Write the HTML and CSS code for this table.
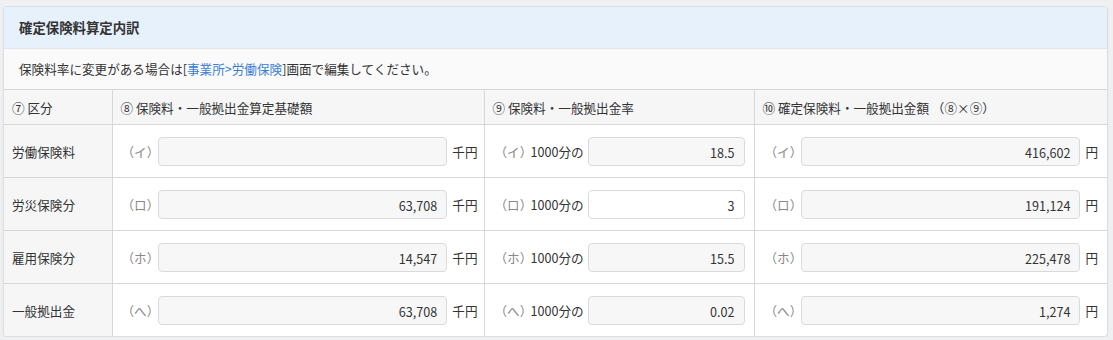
FILE: index.html
```html
<!DOCTYPE html>
<html lang="ja">
<head>
<meta charset="utf-8">
<link rel="stylesheet" href="styles.css">
</head>
<body>
<div class="card">
  <div class="card-title">確定保険料算定内訳</div>
  <div class="notice">保険料率に変更がある場合は[<a class="link" href="#">事業所&gt;労働保険</a>]画面で編集してください。</div>
  <table class="grid">
    <colgroup>
      <col class="c1"><col class="c2"><col class="c3"><col class="c4">
    </colgroup>
    <thead>
      <tr>
        <th>⑦ 区分</th>
        <th>⑧ 保険料・一般拠出金算定基礎額</th>
        <th>⑨ 保険料・一般拠出金率</th>
        <th>⑩ 確定保険料・一般拠出金額 （⑧×⑨）</th>
      </tr>
    </thead>
    <tbody>
      <tr>
        <td class="kind">労働保険料</td>
        <td class="base"><div class="fld"><span class="tag">（イ）</span><span class="box"></span><span class="unit">千円</span></div></td>
        <td><div class="fld"><span class="tag">（イ）</span><span class="per">1000分の</span><span class="box">18.5</span></div></td>
        <td><div class="fld"><span class="tag">（イ）</span><span class="box">416,602</span><span class="unit">円</span></div></td>
      </tr>
      <tr>
        <td class="kind">労災保険分</td>
        <td class="base"><div class="fld"><span class="tag">（ロ）</span><span class="box">63,708</span><span class="unit">千円</span></div></td>
        <td><div class="fld"><span class="tag">（ロ）</span><span class="per">1000分の</span><span class="box edit">3</span></div></td>
        <td><div class="fld"><span class="tag">（ロ）</span><span class="box">191,124</span><span class="unit">円</span></div></td>
      </tr>
      <tr>
        <td class="kind">雇用保険分</td>
        <td class="base"><div class="fld"><span class="tag">（ホ）</span><span class="box">14,547</span><span class="unit">千円</span></div></td>
        <td><div class="fld"><span class="tag">（ホ）</span><span class="per">1000分の</span><span class="box">15.5</span></div></td>
        <td><div class="fld"><span class="tag">（ホ）</span><span class="box">225,478</span><span class="unit">円</span></div></td>
      </tr>
      <tr>
        <td class="kind">一般拠出金</td>
        <td class="base"><div class="fld"><span class="tag">（へ）</span><span class="box">63,708</span><span class="unit">千円</span></div></td>
        <td><div class="fld"><span class="tag">（へ）</span><span class="per">1000分の</span><span class="box">0.02</span></div></td>
        <td><div class="fld"><span class="tag">（へ）</span><span class="box">1,274</span><span class="unit">円</span></div></td>
      </tr>
    </tbody>
  </table>
</div>
</body>
</html>
```
FILE: styles.css
```css
html, body {
  margin: 0;
  padding: 0;
  background: #eff0f2;
}
body {
  padding: 6px 5px 0 3px;
  font-family: "Noto Sans CJK JP", "Noto Sans", sans-serif;
  font-size: 12.6px;
  color: #333;
}
.card {
  background: #fff;
  border: 1px solid #dcdde0;
  border-radius: 4px;
  overflow: hidden;
  box-shadow: 0 1px 2px rgba(0,0,0,0.06);
}
.card-title {
  height: 41px;
  line-height: 41px;
  padding-left: 15px;
  background: #e6f1fc;
  font-weight: bold;
  font-size: 13.4px;
  border-bottom: 1px solid #e3e5e8;
}
.notice {
  height: 40px;
  line-height: 40px;
  padding-left: 15px;
  background: #fafafa;
  border-bottom: 1px solid #d6d7d9;
}
.link {
  color: #3b7ed4;
  text-decoration: none;
}
.grid {
  width: 100%;
  border-collapse: collapse;
  table-layout: fixed;
}
.c1 { width: 108px; }
.c2 { width: 372px; }
.c3 { width: 270px; }
.grid th {
  height: 34px;
  padding: 0 0 0 8px;
  text-align: left;
  font-weight: normal;
  background: #f6f6f7;
  border-right: 1px solid #d6d7d9;
  border-bottom: 1px solid #d6d7d9;
}
.grid td {
  height: 52px;
  padding: 0 9px 0 8px;
  border-right: 1px solid #d6d7d9;
  border-bottom: 1px solid #d6d7d9;
}
.grid td.base { padding-left: 7px; padding-right: 6px; }
.grid th:last-child, .grid td:last-child { border-right: none; }
.grid tbody tr:last-child td { border-bottom: none; }
.grid td.kind {
  background: #f6f6f7;
}
.fld {
  display: flex;
  align-items: center;
}
.tag {
  color: #888;
  width: 36px;
  flex: none;
  margin-left: 2px;
}
.per {
  flex: none;
  width: 57px;
}
.box {
  flex: 1;
  height: 29px;
  line-height: 29px;
  box-sizing: border-box;
  border: 1px solid #d9dadd;
  border-radius: 4px;
  background: #f7f7f8;
  text-align: right;
  padding-right: 9px;
}
.box.edit { background: #fff; }
.unit {
  flex: none;
  margin-left: 5px;
}
```
